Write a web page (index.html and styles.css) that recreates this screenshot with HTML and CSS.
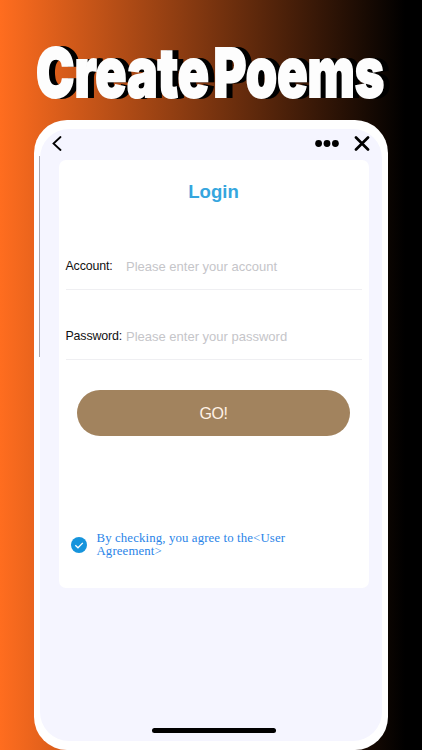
FILE: index.html
```
<!DOCTYPE html>
<html lang="en">

<head>
    <meta charset="UTF-8">
    <title>Create Poems</title>
    <link rel="stylesheet" href="styles.css">
</head>

<body>
    <h1 class="headline">
        <svg width="422" height="119" viewBox="0 0 422 119">
            <text transform="translate(36 97) scale(0.757 1)">Create</text>
            <text transform="translate(213.5 97) scale(0.737 1)">Poems</text>
        </svg>
    </h1>
    <div class="phone">
        <div class="screen">
            <div class="topbar">
                <svg class="back" width="10" height="16" viewBox="0 0 10 16">
                    <path d="M8.5 1L1.5 7.5l7 6.5" />
                </svg>
                <svg class="more" width="24" height="8" viewBox="0 0 24 8">
                    <circle cx="3.6" cy="3.5" r="3.4" />
                    <circle cx="12" cy="3.5" r="3.4" />
                    <circle cx="20.4" cy="3.5" r="3.4" />
                </svg>
                <svg class="close" width="16" height="16" viewBox="0 0 16 16">
                    <path d="M2 1.5l12 12M14 1.5L2 13.5" />
                </svg>
            </div>
            <div class="card">
                <h2 class="title">Login</h2>
                <div class="field">
                    <label for="account">Account:</label>
                    <input type="text" id="account" placeholder="Please enter your account">
                </div>
                <div class="field">
                    <label for="password">Password:</label>
                    <input type="password" id="password" placeholder="Please enter your password">
                </div>
                <button class="go">GO!</button>
                <div class="agreement">
                    <svg width="16" height="16" viewBox="0 0 16 16">
                        <circle cx="8" cy="8" r="8" />
                        <path d="M4.3 8.2l2.7 2.6 4.8-4.9" />
                    </svg>
                    <p><span>By checking, you agree to the&lt;User</span><br><span>Agreement&gt;</span></p>
                </div>
            </div>
            <div class="home-bar"></div>
        </div>
    </div>
</body>

</html>
```

FILE: styles.css
```
* {
    box-sizing: border-box;
    margin: 0;
    padding: 0;
}

body {
    height: 750px;
    overflow: hidden;
    font-family: "Liberation Sans", Arial, sans-serif;
    background: linear-gradient(to right, #ff6d1f 0, #000 405px);
}

.headline {
    height: 119.5px;
}

.headline svg {
    display: block;
    overflow: visible;
    filter: drop-shadow(6px 0 0 #000);
}

.headline text {
    font-family: Inter, sans-serif;
    font-size: 68px;
    font-weight: 900;
    fill: #fdfdfd;
    stroke: #fdfdfd;
    stroke-width: 2px;
}

.phone {
    width: 353.5px;
    height: 630.5px;
    margin-left: 34px;
    padding: 9px 5.5px;
    border-radius: 33px;
    background: #fff;
}

.screen {
    position: relative;
    display: flex;
    flex-direction: column;
    height: 612.5px;
    border-radius: 29px;
    background: #f5f5ff;
}

/* thin scroll line on the left edge */
.screen::before {
    content: "";
    position: absolute;
    left: -1px;
    top: 27px;
    width: 1px;
    height: 201px;
    background: #aaaab2;
}

.topbar {
    display: flex;
    align-items: center;
    height: 31px;
    padding: 0 12px;
}

.topbar path {
    fill: none;
    stroke: #000;
    stroke-linecap: round;
}

.back {
    stroke-width: 1.8;
}

.more {
    margin-left: auto;
    margin-right: 15px;
}

.close {
    stroke-width: 2.7;
}

.card {
    width: 310px;
    height: 428px;
    margin-left: 19px;
    padding: 0 7px;
    border-radius: 7px;
    background: #fff;
}

.title {
    height: 71px;
    padding-top: 21px;
    font-size: 18.6px;
    line-height: 22px;
    text-align: center;
    color: #36a6de;
}

.field {
    display: flex;
    align-items: center;
    height: 46px;
    margin: 13px 0 24px;
    border-bottom: 1.5px solid #efeff2;
}

.field + .field {
    margin-bottom: 30px;
}

.field label {
    width: 60.5px;
    font-size: 12.4px;
    letter-spacing: -0.15px;
    color: #111;
}

.field input {
    flex: 1;
    min-width: 0;
    border: 0;
    outline: 0;
    background: none;
    font-family: inherit;
    font-size: 13px;
}

.field input::placeholder {
    color: #c5c5c9;
}

.go {
    display: block;
    width: 273px;
    height: 46px;
    margin: 0 auto;
    padding-top: 2px;
    border: 0;
    border-radius: 23px;
    background: #a2835e;
    color: #fff2e6;
    font-family: inherit;
    font-size: 16px;
    letter-spacing: -0.4px;
}

.agreement {
    display: flex;
    align-items: center;
    margin-top: 96px;
    padding-left: 5px;
}

.agreement circle {
    fill: #1694dc;
}

.agreement path {
    fill: none;
    stroke: #fff;
    stroke-width: 1.3;
}

.agreement p {
    margin-left: 10px;
    font-family: "Palatino Linotype", Palatino, "Liberation Serif", serif;
    font-size: 12.8px;
    line-height: 13px;
    letter-spacing: 0.13px;
    color: #2a84e8;
}

.home-bar {
    width: 124px;
    height: 5px;
    margin: auto auto 8px 112px;
    border-radius: 3px;
    background: #000;
}
```
